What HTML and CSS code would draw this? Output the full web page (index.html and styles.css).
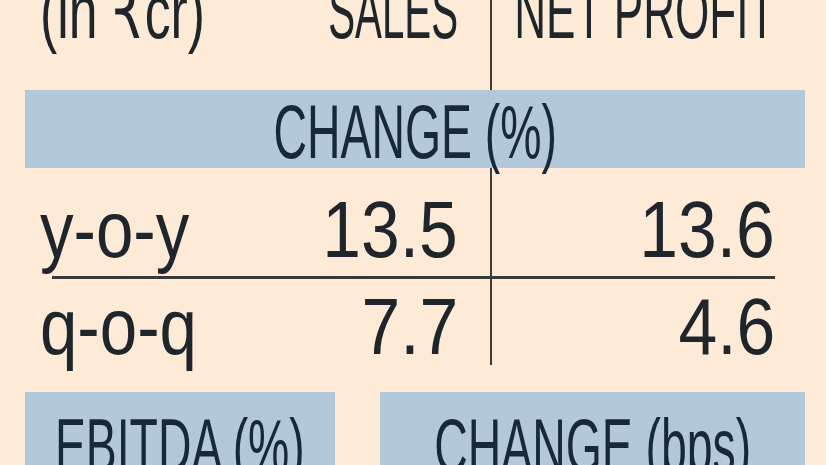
FILE: index.html
```html
<!DOCTYPE html>
<html lang="en">
<head>
    <meta charset="UTF-8">
    <meta name="viewport" content="width=device-width, initial-scale=1.0">
    <title>Sales and Net Profit</title>
    <link rel="stylesheet" href="styles.css">
</head>
<body>

    <div class="sheet">
        <div class="row head">
            <div class="cell label"><span class="unit">(in ₹cr)</span></div>
            <div class="cell sales"><span class="caps narrow">SALES</span></div>
            <div class="cell profit"><span class="caps narrower">NET PROFIT</span></div>
        </div>

        <div class="bar"><span class="caps">CHANGE (%)</span></div>

        <div class="row data first">
            <div class="cell label"><span class="word">y-o-y</span></div>
            <div class="cell sales"><span class="num">13.5</span></div>
            <div class="cell profit"><span class="num">13.6</span></div>
        </div>
        <div class="rule"></div>
        <div class="row data second">
            <div class="cell label"><span class="word">q-o-q</span></div>
            <div class="cell sales"><span class="num">7.7</span></div>
            <div class="cell profit"><span class="num">4.6</span></div>
        </div>

        <div class="boxes">
            <div class="box left"><span class="caps">EBITDA (%)</span></div>
            <div class="box right"><span class="caps">CHANGE (bps)</span></div>
        </div>
    </div>

</body>
</html>
```

FILE: styles.css
```css
body {
    margin: 0;
    padding: 0;
    background-color: #fdead7;
    color: #1e252b;
    font-family: "Liberation Sans", "DejaVu Sans", sans-serif;
    overflow: hidden;
}
.sheet {
    padding: 0 21px 0 25px;
}
.row {
    display: grid;
    grid-template-columns: 265px 200px 315px;
}
.cell {
    display: flex;
    align-items: flex-start;
    min-width: 0;
    font-size: 80px;
    line-height: 80px;
    white-space: nowrap;
    box-sizing: border-box;
}
.label {
    justify-content: flex-start;
    padding-left: 15px;
}
.sales {
    justify-content: flex-end;
    padding-right: 32px;
}
.profit {
    justify-content: flex-end;
    padding-right: 30px;
    border-left: 2px solid #3b3b3b;
}
.caps {
    flex-shrink: 0;
    display: inline-block;
    font-size: 76px;
    line-height: 76px;
    white-space: nowrap;
    transform: scaleX(0.61);
}
.sales .caps,
.profit .caps {
    transform-origin: right center;
}
.caps.narrow {
    transform: scaleX(0.53);
}
.caps.narrower {
    transform: scaleX(0.58);
}
.unit {
    flex-shrink: 0;
    font-size: 76px;
    line-height: 76px;
    transform: scaleX(0.68);
    transform-origin: left center;
}
.word {
    flex-shrink: 0;
    transform: scaleX(0.84);
    transform-origin: left center;
}
.num {
    flex-shrink: 0;
    transform: scaleX(0.87);
    transform-origin: right center;
}
.head {
    margin-top: -26px;
    height: 116px;
}
.head .cell {
    height: 116px;
}
.bar {
    display: flex;
    justify-content: center;
    background-color: #b3c9da;
    height: 78px;
    padding-top: 4px;
    box-sizing: border-box;
    color: #17283a;
}
.data.first .cell {
    height: 108px;
    padding-top: 22px;
}
.rule {
    height: 3px;
    margin: 0 30px 0 27px;
    background-color: #3a3a3a;
}
.data.second .cell {
    height: 86px;
    padding-top: 8px;
}
.boxes {
    display: flex;
    gap: 45px;
    margin-top: 27px;
}
.box {
    display: flex;
    justify-content: center;
    min-width: 0;
    background-color: #b3c9da;
    height: 100px;
    padding-top: 16px;
    box-sizing: border-box;
    color: #17283a;
}
.box.left {
    width: 310px;
}
.box.right {
    width: 425px;
}
```
